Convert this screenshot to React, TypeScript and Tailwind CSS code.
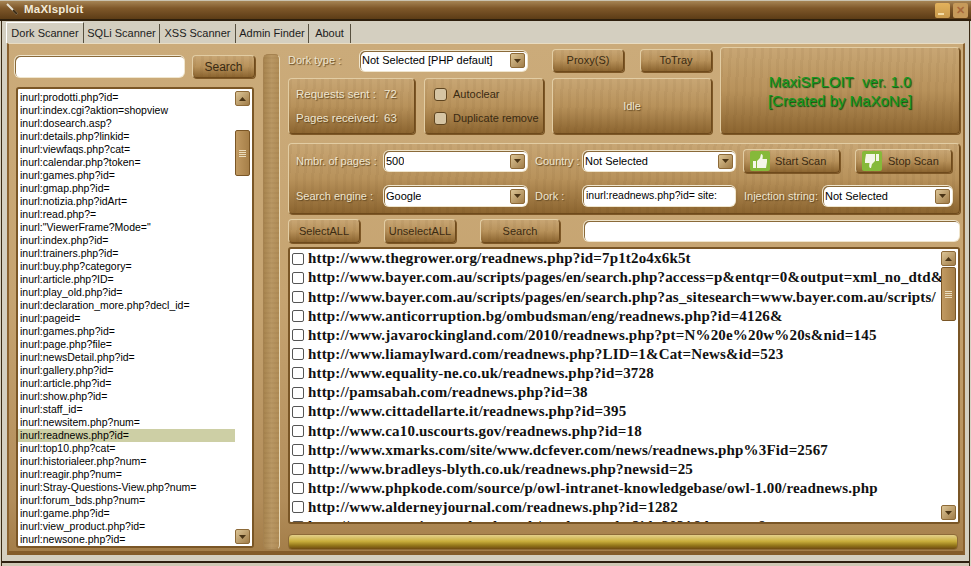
import { ReactNode } from "react";

const dorks = [
  "inurl:prodotti.php?id=",
  "inurl:index.cgi?aktion=shopview",
  "inurl:dosearch.asp?",
  "inurl:details.php?linkid=",
  "inurl:viewfaqs.php?cat=",
  "inurl:calendar.php?token=",
  "inurl:games.php?id=",
  "inurl:gmap.php?id=",
  "inurl:notizia.php?idArt=",
  "inurl:read.php?=",
  'inurl:"ViewerFrame?Mode="',
  "inurl:index.php?id=",
  "inurl:trainers.php?id=",
  "inurl:buy.php?category=",
  "inurl:article.php?ID=",
  "inurl:play_old.php?id=",
  "inurl:declaration_more.php?decl_id=",
  "inurl:pageid=",
  "inurl:games.php?id=",
  "inurl:page.php?file=",
  "inurl:newsDetail.php?id=",
  "inurl:gallery.php?id=",
  "inurl:article.php?id=",
  "inurl:show.php?id=",
  "inurl:staff_id=",
  "inurl:newsitem.php?num=",
  "inurl:readnews.php?id=",
  "inurl:top10.php?cat=",
  "inurl:historialeer.php?num=",
  "inurl:reagir.php?num=",
  "inurl:Stray-Questions-View.php?num=",
  "inurl:forum_bds.php?num=",
  "inurl:game.php?id=",
  "inurl:view_product.php?id=",
  "inurl:newsone.php?id=",
];

const results = [
  "http://www.thegrower.org/readnews.php?id=7p1t2o4x6k5t",
  "http://www.bayer.com.au/scripts/pages/en/search.php?access=p&entqr=0&output=xml_no_dtd&",
  "http://www.bayer.com.au/scripts/pages/en/search.php?as_sitesearch=www.bayer.com.au/scripts/",
  "http://www.anticorruption.bg/ombudsman/eng/readnews.php?id=4126&",
  "http://www.javarockingland.com/2010/readnews.php?pt=N%20e%20w%20s&nid=145",
  "http://www.liamaylward.com/readnews.php?LID=1&Cat=News&id=523",
  "http://www.equality-ne.co.uk/readnews.php?id=3728",
  "http://pamsabah.com/readnews.php?id=38",
  "http://www.cittadellarte.it/readnews.php?id=395",
  "http://www.ca10.uscourts.gov/readnews.php?id=18",
  "http://www.xmarks.com/site/www.dcfever.com/news/readnews.php%3Fid=2567",
  "http://www.bradleys-blyth.co.uk/readnews.php?newsid=25",
  "http://www.phpkode.com/source/p/owl-intranet-knowledgebase/owl-1.00/readnews.php",
  "http://www.alderneyjournal.com/readnews.php?id=1282",
  "http://www.sportingportland.co.uk/readnews.php?id=2021&lang=en&t=",
];

const panel =
  "border border-[#6e4a1c] border-t-[#e2cda4] border-l-[#e2cda4] rounded-[4px] shadow-[1px_1px_0_#7d5726] bg-[repeating-linear-gradient(93deg,rgba(80,50,15,0.05)_0_3px,transparent_3px_8px),linear-gradient(180deg,#c8a674_0%,#b8925b_50%,#8c6530_100%)]";
const field = "bg-white rounded-[5px] shadow-[0_0_0_1px_#f0e6ce,inset_1px_1px_0_#8a6a3a]";

function Label({ children, className = "" }: { children: ReactNode; className?: string }) {
  return <span className={`text-[#efe6d0] [text-shadow:1px_1px_1px_#5f4520] whitespace-nowrap ${className}`}>{children}</span>;
}

function Btn({ children, className = "" }: { children: ReactNode; className?: string }) {
  return <div className={`${panel} flex items-center justify-center text-[#3a2a12] text-[11px] ${className}`}>{children}</div>;
}

function Arrow({ up = false }: { up?: boolean }) {
  return (
    <div className="w-[15px] h-[15px] shrink-0 rounded-[2px] border border-[#8d6a38] bg-[linear-gradient(135deg,#dcc596,#a07c48)] flex items-center justify-center">
      <svg width="7" height="4" viewBox="0 0 7 4" className={up ? "rotate-180" : ""}>
        <path d="M0 0h7L3.500 4z" fill="#4a3415" />
      </svg>
    </div>
  );
}

function Combo({ value, className = "" }: { value: string; className?: string }) {
  return (
    <div className={`${field} h-[20px] flex items-center justify-between pl-[2px] pr-[2px] text-black text-[11px] ${className}`}>
      <span className="whitespace-nowrap overflow-hidden">{value}</span>
      <Arrow />
    </div>
  );
}

function Check() {
  return <div className="w-[13px] h-[13px] rounded-[3px] border border-[#5f4520] bg-[#d6c5a4] shrink-0" />;
}

function Thumb({ down = false }: { down?: boolean }) {
  return (
    <div className="w-[20px] h-[20px] shrink-0 bg-[#86b93a] flex items-center justify-center rounded-[2px]">
      <svg width="16" height="16" viewBox="0 0 16 16" className={down ? "rotate-180" : ""}>
        <path d="M1 8h3v7H1zM5 8l3-3 1-4c2 0 2 2 1.500 5H15v3l-1 6H5z" fill="#f4f6e8" />
      </svg>
    </div>
  );
}

function ScrollBar({ thumbClass }: { thumbClass: string }) {
  return (
    <div className="w-[17px] shrink-0 flex flex-col justify-between items-start bg-white py-[2px]">
      <div className="flex flex-col items-start">
        <Arrow up />
        <div className={`${thumbClass} w-[15px] rounded-[2px] border border-[#7a5626] bg-[linear-gradient(90deg,#c19a62,#a67f48)] flex flex-col items-center justify-center gap-[1px]`}>
          <div className="w-[7px] h-[1px] bg-[#eadcbc]" />
          <div className="w-[7px] h-[1px] bg-[#eadcbc]" />
          <div className="w-[7px] h-[1px] bg-[#eadcbc]" />
          <div className="w-[7px] h-[1px] bg-[#eadcbc]" />
        </div>
      </div>
      <Arrow />
    </div>
  );
}

export default function App() {
  return (
    <div className="w-[971px] h-[566px] overflow-hidden flex flex-col bg-[#d4cfc0] shadow-[inset_1px_0_0_#d8d2c2,inset_2px_0_0_#3a2a14,inset_-1px_0_0_#d8d2c2,inset_-2px_0_0_#3a2a14,inset_0_-3px_0_#cfc8b5,inset_0_-5px_0_#2e2010] font-['Liberation_Sans',sans-serif] text-[11px]">
      {/* title bar */}
      <div className="h-[21px] shrink-0 flex items-center justify-between pl-[5px] pr-[3px] border-t border-[#c9c2b0] border-b-2 border-b-[#2e1f0c] bg-[linear-gradient(180deg,#a68454_0%,#7f582a_40%,#5c3c16_100%)]">
        <div className="flex items-center gap-[5px]">
          <svg width="14" height="14" viewBox="0 0 14 14">
            <path d="M2 1l10 10" stroke="#e8e4d8" strokeWidth="2" />
            <path d="M8 7l4 4" stroke="#3b2a12" strokeWidth="2" />
          </svg>
          <span className="text-[#f2ead8] font-bold text-[11.5px] tracking-[0.2px]">MaXIsploit</span>
        </div>
        <div className="flex gap-[3px]">
          <div className="w-[15px] h-[15px] rounded-[2px] bg-[linear-gradient(180deg,#e3b25c,#c99a4c)] flex items-end justify-start p-[3px]">
            <div className="w-[6px] h-[2px] bg-[#f3dca6]" />
          </div>
          <div className="w-[15px] h-[15px] rounded-[2px] bg-[#c69a5a] flex items-center justify-center text-[#a8683a] font-bold text-[11px]">✕</div>
        </div>
      </div>

      {/* tabs */}
      <div className="h-[22px] shrink-0 flex items-end pl-[6px] text-[#1c1c1c] whitespace-nowrap">
        <div className="h-[21px] w-[78px] flex items-center justify-center border-r border-[#57503f] border-l border-t border-l-white border-t-white">Dork Scanner</div>
        <div className="h-[19px] w-[76px] flex items-center justify-center border-r border-[#57503f]">SQLi Scanner</div>
        <div className="h-[19px] w-[76px] flex items-center justify-center border-r border-[#57503f]">XSS Scanner</div>
        <div className="h-[19px] w-[73px] flex items-center justify-center border-r border-[#57503f]">Admin Finder</div>
        <div className="h-[19px] w-[42px] flex items-center justify-center border-r border-[#57503f]">About</div>
      </div>

      {/* body */}
      <div className="h-[512px] shrink-0 flex ml-[7px] mr-[6px] bg-[linear-gradient(180deg,#cbab7a_0%,#c6a471_50%,#b28d5a_90%,#a47e49_100%)] border-t border-[#e8dcc2] border-l-2 border-l-[#8a6230] border-r-2 border-r-[#8a6230] border-b-4 border-b-[#845c2a]">
        {/* left side */}
        <div className="w-[246px] shrink-0 flex flex-col pl-[6px] pt-[11px]">
          <div className="flex justify-between items-center">
            <div className={`${field} w-[169px] h-[21px]`} />
            <Btn className="w-[63px] h-[23px] text-[12px]">Search</Btn>
          </div>
          <div className="mt-[9px] mx-[1px] flex h-[461px] border-2 border-[#7a5626] rounded-[3px] bg-white text-black text-[10.5px] overflow-hidden">
            <div className="flex-1 min-w-0 pt-[2px] overflow-hidden">
              {dorks.map((d, i) => (
                <div key={i} className={`h-[13px] leading-[13px] pl-[2px] whitespace-nowrap ${d === "inurl:readnews.php?id=" ? "bg-[#cdcfa5]" : ""}`}>
                  {d}
                </div>
              ))}
            </div>
            <ScrollBar thumbClass="mt-[24px] h-[46px]" />
          </div>
        </div>

        {/* divider */}
        <div className="w-[17px] h-[496px] shrink-0 ml-[8px] mt-[10px] rounded-[5px] border border-[#a58250] border-r-[#e6d6b4] bg-[repeating-linear-gradient(0deg,rgba(80,50,15,0.05)_0_2px,transparent_2px_5px),linear-gradient(90deg,#a8854f,#b99764_50%,#b08c56)]" />

        {/* right side */}
        <div className="w-[672px] shrink-0 ml-[8px] pt-[3px] flex flex-col">
          <div className="flex gap-[8px]">
            <div className="w-[424px] flex flex-col">
              <div className="h-[27px] mb-[4px] flex items-center">
                <Label className="w-[72px]">Dork type :</Label>
                <Combo value="Not Selected [PHP default]" className="w-[167px]" />
                <Btn className="w-[72px] h-[23px] ml-[25px]">Proxy(S)</Btn>
                <Btn className="w-[72px] h-[23px] ml-[16px]">ToTray</Btn>
              </div>
              <div className="flex h-[56px]">
                <div className={`${panel} w-[127px] flex flex-col justify-center gap-[11px] pl-[7px] text-[11.5px] leading-[13px]`}>
                  <div className="flex"><Label className="w-[88px]">Requests sent :</Label><Label>72</Label></div>
                  <div className="flex"><Label className="w-[88px]">Pages received:</Label><Label>63</Label></div>
                </div>
                <div className={`${panel} w-[120px] ml-[9px] flex flex-col justify-center gap-[11px] pl-[9px] text-[#3a2a12] leading-[13px]`}>
                  <div className="flex items-center gap-[6px]"><Check />Autoclear</div>
                  <div className="flex items-center gap-[6px]"><Check /><span className="whitespace-nowrap">Duplicate remove</span></div>
                </div>
                <div className={`${panel} w-[160px] ml-[8px] flex items-center justify-center`}>
                  <Label>Idle</Label>
                </div>
              </div>
            </div>
            <div className={`${panel} w-[240px] h-[87px] flex flex-col items-center justify-center text-[#169a1f] text-[15px] leading-[19px] [text-shadow:1px_1px_1px_#0b4d0b]`}>
              <div>MaxiSPLOIT&nbsp; ver. 1.0</div>
              <div>[Created by MaXoNe]</div>
            </div>
          </div>

          <div className={`${panel} mt-[9px] h-[71px] flex flex-col gap-[11px] pt-[5px] pl-[7px]`}>
            <div className="flex items-center h-[24px]">
              <Label className="w-[88px]">Nmbr. of pages :</Label>
              <Combo value="500" className="w-[143px]" />
              <Label className="ml-[8px] w-[48px]">Country :</Label>
              <Combo value="Not Selected" className="w-[152px]" />
              <Btn className="w-[97px] h-[24px] ml-[8px] justify-start pl-[6px] gap-[5px]"><Thumb />Start Scan</Btn>
              <Btn className="w-[97px] h-[24px] ml-[15px] justify-start pl-[6px] gap-[6px]"><Thumb down />Stop Scan</Btn>
            </div>
            <div className="flex items-center h-[24px]">
              <Label className="w-[88px]">Search engine :</Label>
              <Combo value="Google" className="w-[143px]" />
              <Label className="ml-[8px] w-[48px]">Dork :</Label>
              <div className={`${field} w-[152px] h-[20px] flex items-center pl-[3px] text-black text-[10.5px] whitespace-nowrap overflow-hidden`}>inurl:readnews.php?id= site:</div>
              <Label className="ml-[9px] w-[79px]">Injection string:</Label>
              <Combo value="Not Selected" className="w-[129px]" />
            </div>
          </div>

          <div className="mt-[5px] flex items-center h-[24px]">
            <Btn className="w-[72px] h-[24px]">SelectALL</Btn>
            <Btn className="w-[72px] h-[24px] ml-[24px]">UnselectALL</Btn>
            <Btn className="w-[80px] h-[24px] ml-[24px]">Search</Btn>
            <div className={`${field} w-[375px] h-[20px] ml-[24px]`} />
          </div>

          <div className="mt-[4px] h-[277px] flex border-2 border-[#7a5626] rounded-[3px] bg-white overflow-hidden">
            <div className="flex-1 min-w-0 pl-[2px] overflow-hidden font-['Liberation_Serif',serif] font-bold text-[15px] tracking-[0.17px] text-[#111]">
              {results.map((r, i) => (
                <div key={i} className="h-[19.15px] flex items-center gap-[4px] whitespace-nowrap">
                  <div className="w-[12px] h-[12px] rounded-[2px] border border-[#555] shrink-0" />
                  <span>{r}</span>
                </div>
              ))}
            </div>
            <ScrollBar thumbClass="mt-[1px] h-[54px]" />
          </div>

          <div className="mt-[10px] mr-[2px] h-[16px] rounded-[4px] border border-[#8d6a38] bg-[linear-gradient(180deg,#e4d08a_0%,#c9ae3c_45%,#93761a_75%,#6e4a12_100%)]" />
        </div>
      </div>
    </div>
  );
}
